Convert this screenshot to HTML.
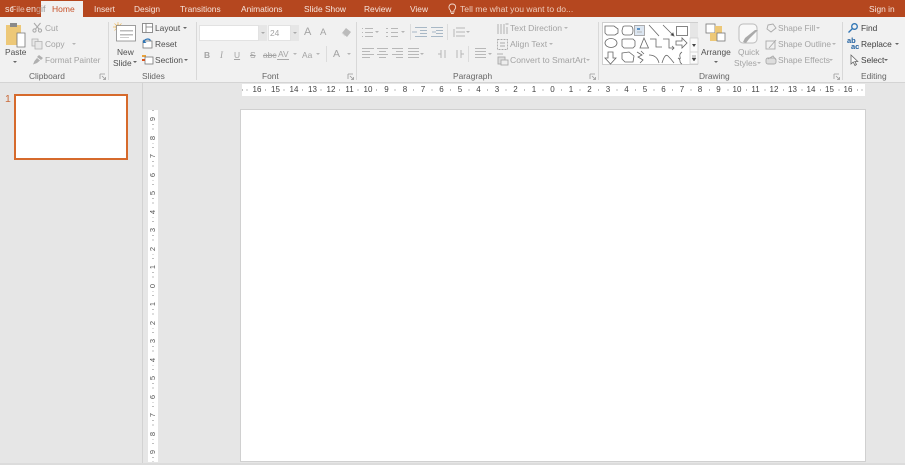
<!DOCTYPE html>
<html><head><meta charset="utf-8">
<style>
html,body{margin:0;padding:0}
body{width:905px;height:465px;overflow:hidden;position:relative;background:#e6e6e6;font-family:"Liberation Sans",sans-serif}
.a{position:absolute}
.t{position:absolute;white-space:nowrap;font-size:8.4px;line-height:10px;color:#505050}
.d{color:#a3a3a3}
.w{color:#f6e4dc}
.l{color:#666}
.s{position:absolute;width:1px;background:#d8d8d8;top:22px;height:58px}
.h{position:absolute;top:85px;font-size:8px;line-height:10px;color:#444;width:14px;margin-left:-7px;text-align:center}
.v{position:absolute;left:148px;width:10px;height:10px;font-size:7.5px;line-height:10px;color:#555;text-align:center;transform:rotate(-90deg)}
svg{position:absolute;overflow:visible}
</style></head><body>
<div class="a" style="left:0;top:0;width:905px;height:17px;background:#b5471f"></div>
<div class="a" style="left:0;top:17px;width:905px;height:65px;background:#f1f1f1"></div>
<div class="a" style="left:0;top:82px;width:905px;height:1px;background:#d4d4d4"></div>
<div class="a" style="left:41px;top:1px;width:42px;height:17px;background:#f1f1f1"></div>

<div class="t w" style="left:5px;top:4px;font-size:9px">sc</div>
<div class="t w" style="left:11px;top:4px;font-size:8.5px;opacity:.75">File</div>
<div class="t w" style="left:26px;top:4px;font-size:9px">en</div>
<div class="t" style="left:36px;top:4px;font-size:9px;color:#c9a090">g</div>
<div class="t" style="left:41px;top:4px;font-size:9px;color:#999">if</div>
<div class="t" style="left:52px;top:4px;color:#c8522a;font-size:8.5px">Home</div>
<div class="t w" style="left:94px;top:4px">Insert</div>
<div class="t w" style="left:134px;top:4px">Design</div>
<div class="t w" style="left:180px;top:4px">Transitions</div>
<div class="t w" style="left:241px;top:4px">Animations</div>
<div class="t w" style="left:304px;top:4px">Slide Show</div>
<div class="t w" style="left:364px;top:4px">Review</div>
<div class="t w" style="left:410px;top:4px">View</div>
<svg style="left:448px;top:3px" width="9" height="12" viewBox="0 0 9 12" fill="none" stroke="#f3d9cd" stroke-width=".9"><path d="M2.6 7.4C1 6 .8 4.6 1 3.6 1.4 1.8 2.8 1 4.2 1S7.2 1.8 7.6 3.6C7.8 4.8 7.4 6 6 7.4V9H2.6ZM3 10.5H5.8"/></svg>
<div class="t" style="left:460px;top:4px;color:#eecdbd;font-size:8.6px">Tell me what you want to do...</div>
<div class="t w" style="left:869px;top:4px">Sign in</div>

<!-- clipboard -->
<svg style="left:5px;top:22px" width="22" height="26" viewBox="0 0 22 26"><rect x="1" y="3" width="15" height="20" fill="#edc878"/><rect x="5" y="1" width="7" height="4" fill="#8a8a8a"/><path d="M12 11H20V25H12Z" fill="#fff" stroke="#777" stroke-width=".8"/></svg>
<div class="t" style="left:5px;top:47px">Paste</div>
<div class="a" style="left:13px;top:61px;border:2px solid transparent;border-top:2px solid #666"></div>
<svg style="left:32px;top:22px" width="11" height="11" viewBox="0 0 11 11" fill="none" stroke="#a8a8a8" stroke-width="1"><path d="M2 1L7 7M8.500 1L3.500 7"/><circle cx="2.500" cy="8.500" r="1.600"/><circle cx="8" cy="8.500" r="1.600"/></svg>
<div class="t d" style="left:45px;top:23px">Cut</div>
<svg style="left:31px;top:38px" width="12" height="12" viewBox="0 0 12 12" fill="#e8e8e8" stroke="#b0b0b0" stroke-width=".8"><path d="M1 1H7V8H1Z"/><path d="M4 3.500H11V11H4Z"/></svg>
<div class="t d" style="left:45px;top:39px">Copy</div>
<div class="a" style="left:72px;top:43px;border:2px solid transparent;border-top:2px solid #b5b5b5"></div>
<svg style="left:32px;top:54px" width="12" height="11" viewBox="0 0 12 11" fill="#b0b0b0"><path d="M7 1L11 4 9 6 5 3ZM5 4L8 6.500 5 9 1 10.500 2.500 7Z"/></svg>
<div class="t d" style="left:45px;top:55px">Format Painter</div>
<div class="t l" style="left:29px;top:71px">Clipboard</div>
<svg style="left:100px;top:74px" width="6" height="6" fill="none" stroke="#999" stroke-width=".8"><path d="M0 0H5M0 0V5M2 2L5.500 5.500M3 5.500H5.500V3"/></svg>
<div class="s" style="left:108px"></div>

<!-- slides -->
<svg style="left:113px;top:22px" width="23" height="20" viewBox="0 0 23 20"><circle cx="5" cy="5" r="2.500" fill="#edb95c"/><path d="M5 0V10M0 5H10M1.500 1.500L8.500 8.500M8.500 1.500L1.500 8.500" stroke="#edb95c" stroke-width=".7"/><rect x="3.500" y="3.500" width="19" height="15.500" fill="#fff" stroke="#888" stroke-width=".8"/><rect x="7" y="8" width="13" height="1.500" fill="#bbb"/><rect x="7" y="12" width="13" height="1.500" fill="#bbb"/><rect x="7" y="15" width="9" height="1" fill="#ccc"/></svg>
<div class="t" style="left:117px;top:47px">New</div>
<div class="t" style="left:113px;top:58px">Slide</div>
<div class="a" style="left:133px;top:61px;border:2px solid transparent;border-top:2px solid #666"></div>
<svg style="left:142px;top:23px" width="11" height="10" fill="#fff" stroke="#777" stroke-width=".8"><rect x=".5" y=".5" width="10" height="9"/><path d="M4 .5V9.500M4 4H10.500" fill="none"/></svg>
<div class="t" style="left:155px;top:23px">Layout</div>
<div class="a" style="left:183px;top:27px;border:2px solid transparent;border-top:2px solid #666"></div>
<svg style="left:142px;top:38px" width="11" height="11" viewBox="0 0 11 11"><rect x="1" y="3" width="9" height="7" fill="#fff" stroke="#777" stroke-width=".8"/><path d="M2 4A3.500 3 0 0 1 8.500 2.500" fill="none" stroke="#2f75b5" stroke-width="1.200"/><path d="M1 1.500V5H4.500Z" fill="#2f75b5"/></svg>
<div class="t" style="left:155px;top:39px">Reset</div>
<svg style="left:142px;top:54px" width="12" height="11" viewBox="0 0 12 11"><rect x="0" y="1" width="4" height="2" fill="#e9a23b"/><rect x="3" y="3" width="8" height="7" fill="#fff" stroke="#777" stroke-width=".8"/><rect x="0" y="5" width="3" height="2" fill="#d9541e"/></svg>
<div class="t" style="left:155px;top:55px">Section</div>
<div class="a" style="left:184px;top:59px;border:2px solid transparent;border-top:2px solid #666"></div>
<div class="t l" style="left:142px;top:71px">Slides</div>
<div class="s" style="left:196px"></div>

<!-- font -->
<div class="a" style="left:199px;top:25px;width:60px;height:16px;background:#fff;border:1px solid #e2e2e2;box-sizing:border-box"></div>
<div class="a" style="left:259px;top:25px;width:8px;height:16px;background:#e6e6e6"></div>
<div class="a" style="left:261px;top:32px;border:2px solid transparent;border-top:2px solid #aaa"></div>
<div class="a" style="left:268px;top:25px;width:23px;height:16px;background:#fff;border:1px solid #e2e2e2;box-sizing:border-box"></div>
<div class="t d" style="left:270px;top:28px">24</div>
<div class="a" style="left:291px;top:25px;width:8px;height:16px;background:#e6e6e6"></div>
<div class="a" style="left:293px;top:32px;border:2px solid transparent;border-top:2px solid #aaa"></div>
<div class="t d" style="left:304px;top:27px;font-size:11px">A</div>
<div class="t d" style="left:320px;top:28px;font-size:9.500px">A</div>
<svg style="left:340px;top:27px" width="12" height="11" viewBox="0 0 12 11" fill="#bbb"><path d="M6 1L11 5 7 10 2 6Z"/><path d="M2 6L5 9" stroke="#ddd"/></svg>
<div class="t d" style="left:204px;top:50px;font-weight:bold">B</div>
<div class="t d" style="left:220px;top:50px;font-style:italic;font-family:'Liberation Serif',serif;font-size:9px">I</div>
<div class="t d" style="left:234px;top:50px;text-decoration:underline">U</div>
<div class="t d" style="left:250px;top:50px;text-decoration:line-through">S</div>
<div class="t d" style="left:263px;top:50px;text-decoration:line-through">abc</div>
<div class="t d" style="left:278px;top:49px">AV</div>
<svg style="left:277px;top:58px" width="12" height="3" stroke="#aaa" fill="none"><path d="M0 1.500H12"/></svg>
<div class="a" style="left:293px;top:53px;border:2px solid transparent;border-top:2px solid #b5b5b5"></div>
<div class="t d" style="left:302px;top:50px">Aa</div>
<div class="a" style="left:316px;top:53px;border:2px solid transparent;border-top:2px solid #b5b5b5"></div>
<div class="a" style="left:326px;top:46px;width:1px;height:16px;background:#dcdcdc"></div>
<div class="t d" style="left:333px;top:49px;font-size:10.500px">A</div>
<div class="a" style="left:347px;top:53px;border:2px solid transparent;border-top:2px solid #b5b5b5"></div>
<div class="t l" style="left:262px;top:71px">Font</div>
<svg style="left:348px;top:74px" width="6" height="6" fill="none" stroke="#999" stroke-width=".8"><path d="M0 0H5M0 0V5M2 2L5.500 5.500M3 5.500H5.500V3"/></svg>
<div class="s" style="left:356px"></div>

<!-- paragraph -->
<svg style="left:360px;top:25px" width="120" height="40" fill="none" stroke="#b8b8b8" stroke-width="1">
<path stroke-dasharray="1.500 1.500" d="M2 3.500H3M2 7.500H3M2 11.500H3"/><path d="M5 3.500H13M5 7.500H13M5 11.500H13"/>
<path d="M26 3.500H28M26 7.500H28M26 11.500H28M31 3.500H38M31 7.500H38M31 11.500H38"/>
<path stroke="#a8b8c6" d="M55 2.500H67M60 5.500H67M60 8.500H67M55 11.500H67M52 7H57" />
<path stroke="#a8b8c6" d="M71 2.500H83M76 5.500H83M76 8.500H83M71 11.500H83M72 7H76" />
<path d="M94 4V12M96 3H105M96 7H105M96 11H105" />
<path d="M2 23.500H14M2 26.500H10M2 29.500H14M2 32.500H10"/>
<path d="M17 23.500H28M19 26.500H26M17 29.500H28M19 32.500H26"/>
<path d="M32 23.500H43M36 26.500H43M32 29.500H43M36 32.500H43"/>
<path d="M48 23.500H59M48 26.500H59M48 29.500H59M48 32.500H59"/>
<path d="M81 25V33M85 25V33M78 29H81" /><path d="M97 25V33M101 25V33M104 29H101"/>
<path d="M115 23.500H126M115 26.500H126M115 29.500H126M115 32.500H126" />
</svg>
<div class="a" style="left:375px;top:31px;border:2px solid transparent;border-top:2px solid #b5b5b5"></div>
<div class="a" style="left:401px;top:31px;border:2px solid transparent;border-top:2px solid #b5b5b5"></div>
<div class="a" style="left:466px;top:31px;border:2px solid transparent;border-top:2px solid #b5b5b5"></div>
<div class="a" style="left:420px;top:53px;border:2px solid transparent;border-top:2px solid #b5b5b5"></div>
<div class="a" style="left:488px;top:53px;border:2px solid transparent;border-top:2px solid #b5b5b5"></div>
<div class="a" style="left:410px;top:24px;width:1px;height:16px;background:#dcdcdc"></div>
<div class="a" style="left:447px;top:24px;width:1px;height:16px;background:#dcdcdc"></div>
<div class="a" style="left:468px;top:46px;width:1px;height:16px;background:#dcdcdc"></div>
<svg style="left:497px;top:22px" width="12" height="43" fill="none" stroke="#aaa" stroke-width=".9"><path d="M1 2V12M4 2V12M7 2V12M10 5V12M8.500 2H11.500"/><rect x="0.500" y="17.500" width="10" height="10" stroke-dasharray="2 1"/><path d="M3 21H8M3 24H8"/><rect x="1" y="35" width="7" height="7" fill="#ddd"/><rect x="4" y="38" width="7" height="5" fill="#eee"/><path d="M0 32H6"/></svg>
<div class="t d" style="left:510px;top:23px;font-size:8.600px">Text Direction</div>
<div class="a" style="left:564px;top:27px;border:2px solid transparent;border-top:2px solid #b5b5b5"></div>
<div class="t d" style="left:510px;top:39px;font-size:8.600px">Align Text</div>
<div class="a" style="left:549px;top:43px;border:2px solid transparent;border-top:2px solid #b5b5b5"></div>
<div class="t d" style="left:510px;top:55px;font-size:8.600px">Convert to SmartArt</div>
<div class="a" style="left:586px;top:59px;border:2px solid transparent;border-top:2px solid #b5b5b5"></div>
<div class="t l" style="left:453px;top:71px">Paragraph</div>
<svg style="left:590px;top:74px" width="6" height="6" fill="none" stroke="#999" stroke-width=".8"><path d="M0 0H5M0 0V5M2 2L5.500 5.500M3 5.500H5.500V3"/></svg>
<div class="s" style="left:598px"></div>

<!-- drawing gallery -->
<div class="a" style="left:602px;top:22px;width:96px;height:43px;background:#fff;border:1px solid #cfcfcf;box-sizing:border-box"></div>
<svg style="left:602px;top:22px" width="96" height="43" viewBox="0 0 96 43" fill="none" stroke="#666" stroke-width=".8">
<path d="M3 4H12L16 7V11L13 13H5L3 11Z"/>
<path d="M21 5Q21 4 23 4H28Q31 4 31 8.500T28 13H23Q20 13 20 8.500Z"/>
<rect x="32.500" y="3.500" width="10" height="10" fill="#dce6f1" stroke="#999"/><path d="M35 7H38" stroke="#2f75b5" stroke-width="1.500"/><path d="M35 10H40" stroke="#aaa"/>
<path d="M47 3L57 14"/><path d="M61 3L71 13"/><path d="M72 14L69 13 71 11Z" fill="#333"/>
<rect x="74.500" y="4.500" width="11" height="9"/>
<ellipse cx="9" cy="21" rx="6" ry="4.500"/><path d="M20 18Q20 17 22 17H31L33 19V24L31 26H22L20 24Z"/>
<path d="M38 26L42 16 46.500 26Z"/><path d="M48 17H54V25H60"/><path d="M61 17H67V26H72M70 24L72 26 70 28" />
<path d="M74 19H80V16L85 21 80 26V23H74Z"/>
<path d="M6 30H11V36H14L8.500 42 3 36H6Z"/><path d="M20 31L27 30 32 34 31 40H23L20 37Z"/>
<path d="M35 30L40 33 36 35 41 38 38 41M39 29L42 32" />
<path d="M47 33Q55 33 57 41"/><path d="M60 41Q63 31 66 34T72 41"/><path d="M80 30Q77 32 78 35T76 36Q78 37 78 39T80 42" />
<rect x="88" y="1" width="8" height="15" fill="#e6e6e6" stroke="none"/>
<rect x="88" y="16" width="8" height="26" fill="#fafafa" stroke="#cfcfcf"/>
<path d="M88 30H96" stroke="#cfcfcf"/>
<path d="M90 22H94L92 25Z" fill="#444" stroke="none"/>
<path d="M90 34H94M90 36H94L92 39Z" fill="#444" stroke="#444" stroke-width=".5"/>
</svg>
<svg style="left:705px;top:22px" width="22" height="22" viewBox="0 0 22 22"><rect x="1" y="2" width="9" height="9" fill="#fff" stroke="#777" stroke-width=".8"/><rect x="10" y="4" width="7" height="8" fill="#edc878"/><rect x="5" y="11" width="7" height="8" fill="#edc878"/><rect x="12" y="11" width="8" height="8" fill="#fff" stroke="#777" stroke-width=".8"/></svg>
<div class="t" style="left:701px;top:47px">Arrange</div>
<div class="a" style="left:714px;top:61px;border:2px solid transparent;border-top:2px solid #666"></div>
<svg style="left:737px;top:22px" width="23" height="24" viewBox="0 0 23 24"><rect x="2" y="2" width="18" height="19" rx="4" fill="#f8f8f8" stroke="#bbb"/><path d="M21 8L12 17 9 21 6 20 8 16 18 8Z" fill="#aaa"/></svg>
<div class="t d" style="left:738px;top:47px">Quick</div>
<div class="t d" style="left:734px;top:58px">Styles</div>
<div class="a" style="left:757px;top:62px;border:2px solid transparent;border-top:2px solid #b5b5b5"></div>
<svg style="left:765px;top:22px" width="12" height="42" fill="none" stroke="#aaa" stroke-width=".9"><path d="M3 3L8 2 11 6 6 10 2 7Z"/><rect x="1" y="19" width="9" height="8"/><path d="M4 26L11 18"/><rect x="1" y="36" width="10" height="6" rx="2" fill="#ddd"/><path d="M3 37L8 34 11 38"/></svg>
<div class="t d" style="left:778px;top:23px">Shape Fill</div>
<div class="a" style="left:816px;top:27px;border:2px solid transparent;border-top:2px solid #b5b5b5"></div>
<div class="t d" style="left:778px;top:39px">Shape Outline</div>
<div class="a" style="left:832px;top:43px;border:2px solid transparent;border-top:2px solid #b5b5b5"></div>
<div class="t d" style="left:778px;top:55px">Shape Effects</div>
<div class="a" style="left:829px;top:59px;border:2px solid transparent;border-top:2px solid #b5b5b5"></div>
<div class="t l" style="left:699px;top:71px">Drawing</div>
<svg style="left:834px;top:74px" width="6" height="6" fill="none" stroke="#999" stroke-width=".8"><path d="M0 0H5M0 0V5M2 2L5.500 5.500M3 5.500H5.500V3"/></svg>
<div class="s" style="left:842px"></div>

<!-- editing -->
<svg style="left:848px;top:23px" width="11" height="10" fill="none" stroke="#2f75b5" stroke-width="1.300"><circle cx="6.500" cy="3.500" r="2.800"/><path d="M4.500 5.500L.5 9.500"/></svg>
<div class="t" style="left:861px;top:23px;color:#404040">Find</div>
<div class="t" style="left:847px;top:36px;color:#1f5f9f;font-size:7.500px;font-weight:bold">ab</div>
<div class="t" style="left:851px;top:42px;color:#1f5f9f;font-size:7.500px;font-weight:bold">ac</div>
<div class="t" style="left:861px;top:39px;color:#404040">Replace</div>
<div class="a" style="left:895px;top:43px;border:2px solid transparent;border-top:2px solid #666"></div>
<svg style="left:850px;top:54px" width="9" height="12" fill="#fafafa" stroke="#666" stroke-width=".8"><path d="M1 1V10L3.200 8 5 11.500 6.500 10.500 4.800 7.500H7.800Z"/></svg>
<div class="t" style="left:861px;top:55px;color:#404040">Select</div>
<div class="a" style="left:884px;top:59px;border:2px solid transparent;border-top:2px solid #666"></div>
<div class="t l" style="left:861px;top:71px">Editing</div>

<!-- work area -->
<div class="a" style="left:142px;top:83px;width:1px;height:382px;background:#d2d2d2"></div>
<div class="t" style="left:5px;top:94px;color:#c96a3a;font-size:10.500px;line-height:11px">1</div>
<div class="a" style="left:14px;top:94px;width:114px;height:66px;box-sizing:border-box;background:#fff;border:2px solid #d66a2c"></div>
<div class="a" style="left:240px;top:109px;width:626px;height:353px;box-sizing:border-box;background:#fff;border:1px solid #d0d0d0"></div>
<div class="a" style="left:0;top:463px;width:905px;height:2px;background:#dcdcdc"></div>

<!-- h ruler -->
<div class="a" style="left:242px;top:84px;width:623px;height:12px;background:#fff"></div>
<div class="a" style="left:242px;top:89px;width:623px;height:2px;background:repeating-linear-gradient(90deg,#888 0 1px,transparent 1px 4.625px);opacity:.55"></div>
<div class="h" style="left:257px;background:#fff">16</div><div class="h" style="left:275.500px;background:#fff">15</div><div class="h" style="left:294px;background:#fff">14</div><div class="h" style="left:312.500px;background:#fff">13</div><div class="h" style="left:331px;background:#fff">12</div><div class="h" style="left:349.500px;background:#fff">11</div><div class="h" style="left:368px;background:#fff">10</div><div class="h" style="left:386.500px;background:#fff">9</div><div class="h" style="left:405px;background:#fff">8</div><div class="h" style="left:423px;background:#fff">7</div><div class="h" style="left:441.500px;background:#fff">6</div><div class="h" style="left:460px;background:#fff">5</div><div class="h" style="left:478.500px;background:#fff">4</div><div class="h" style="left:497px;background:#fff">3</div><div class="h" style="left:515.500px;background:#fff">2</div><div class="h" style="left:534px;background:#fff">1</div><div class="h" style="left:552.500px;background:#fff">0</div><div class="h" style="left:571px;background:#fff">1</div><div class="h" style="left:589.500px;background:#fff">2</div><div class="h" style="left:608px;background:#fff">3</div><div class="h" style="left:626.500px;background:#fff">4</div><div class="h" style="left:645px;background:#fff">5</div><div class="h" style="left:663.500px;background:#fff">6</div><div class="h" style="left:682px;background:#fff">7</div><div class="h" style="left:700px;background:#fff">8</div><div class="h" style="left:718.500px;background:#fff">9</div><div class="h" style="left:737px;background:#fff">10</div><div class="h" style="left:755.500px;background:#fff">11</div><div class="h" style="left:774px;background:#fff">12</div><div class="h" style="left:792.500px;background:#fff">13</div><div class="h" style="left:811px;background:#fff">14</div><div class="h" style="left:829.500px;background:#fff">15</div><div class="h" style="left:848px;background:#fff">16</div>

<!-- v ruler -->
<div class="a" style="left:148px;top:110px;width:10px;height:352px;background:#fff"></div>
<div class="a" style="left:152px;top:110px;width:2px;height:352px;background:repeating-linear-gradient(180deg,#888 0 1px,transparent 1px 4.625px);opacity:.55"></div>
<div class="v" style="top:114px;background:#fff">9</div><div class="v" style="top:132.500px;background:#fff">8</div><div class="v" style="top:151px;background:#fff">7</div><div class="v" style="top:169.500px;background:#fff">6</div><div class="v" style="top:188px;background:#fff">5</div><div class="v" style="top:206.500px;background:#fff">4</div><div class="v" style="top:225px;background:#fff">3</div><div class="v" style="top:243.500px;background:#fff">2</div><div class="v" style="top:262px;background:#fff">1</div><div class="v" style="top:280.500px;background:#fff">0</div><div class="v" style="top:299px;background:#fff">1</div><div class="v" style="top:317.500px;background:#fff">2</div><div class="v" style="top:336px;background:#fff">3</div><div class="v" style="top:354.500px;background:#fff">4</div><div class="v" style="top:373px;background:#fff">5</div><div class="v" style="top:391.500px;background:#fff">6</div><div class="v" style="top:410px;background:#fff">7</div><div class="v" style="top:428.500px;background:#fff">8</div><div class="v" style="top:447px;background:#fff">9</div>
</body></html>
